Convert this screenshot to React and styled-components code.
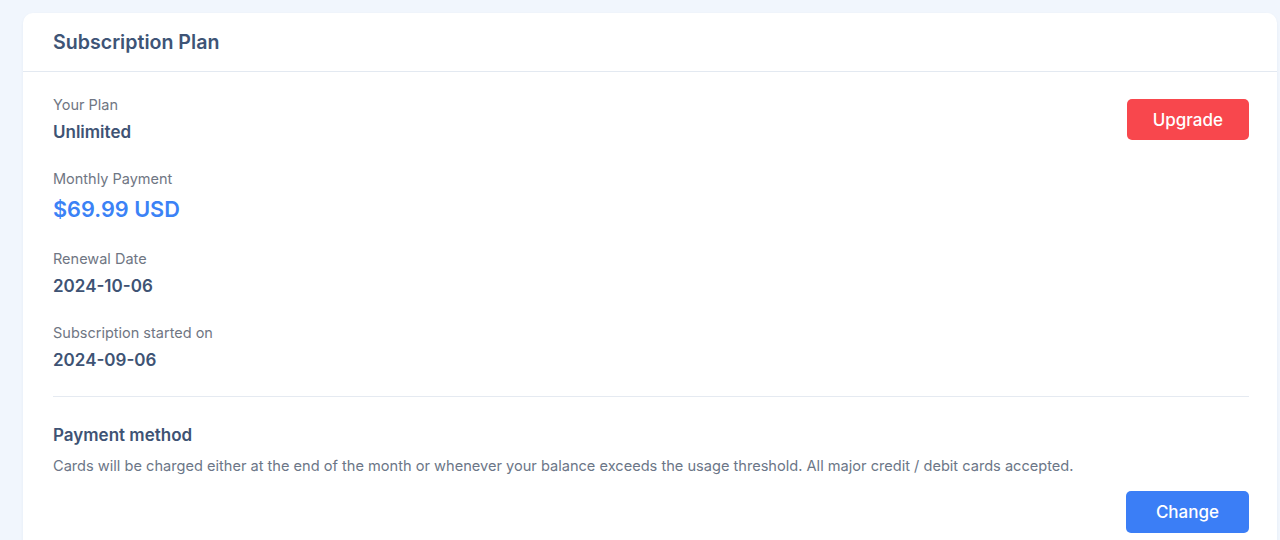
import React from "react";
import styled, { createGlobalStyle } from "styled-components";

const GlobalStyle = createGlobalStyle`
  html, body {
    margin: 0;
    padding: 0;
    background: #f1f6fd;
    font-family: Inter, "Noto Sans", sans-serif;
  }
`;

const fields = [
  { label: "Your Plan", value: "Unlimited" },
  { label: "Monthly Payment", value: "$69.99 USD", accent: true },
  { label: "Renewal Date", value: "2024-10-06" },
  { label: "Subscription started on", value: "2024-09-06" },
];

function App() {
  const [first, ...rest] = fields;
  return (
    <Page>
      <GlobalStyle />
      <Card>
        <CardHeader>
          <Title>Subscription Plan</Title>
        </CardHeader>
        <CardBody>
          <TopRow>
            <Field>
              <Label>{first.label}</Label>
              <Value>{first.value}</Value>
            </Field>
            <Button $tone="red">Upgrade</Button>
          </TopRow>
          {rest.map((f) => (
            <Field key={f.label} $spaced>
              <Label>{f.label}</Label>
              <Value $accent={f.accent}>{f.value}</Value>
            </Field>
          ))}
          <Divider />
          <SectionTitle>Payment method</SectionTitle>
          <Description>
            Cards will be charged either at the end of the month or whenever your
            balance exceeds the usage threshold. All major credit / debit cards
            accepted.
          </Description>
          <Actions>
            <Button $tone="blue">Change</Button>
          </Actions>
        </CardBody>
      </Card>
    </Page>
  );
}

const Page = styled.div`
  padding: 13px 3px 0 23px;
  min-height: 540px;
  box-sizing: border-box;
`;

const Card = styled.div`
  background: #ffffff;
  border-radius: 10px;
  box-shadow: 0 1px 3px rgba(30, 60, 110, 0.06);
  padding-bottom: 30px;
`;

const CardHeader = styled.div`
  height: 58px;
  display: flex;
  align-items: center;
  padding: 0 30px;
  border-bottom: 1px solid #e3e9f1;
`;

const Title = styled.h2`
  margin: 0;
  font-size: 19.6px;
  line-height: 24px;
  font-weight: 600;
  color: #3e5476;
`;

const CardBody = styled.div`
  padding: 23px 28px 0 30px;
`;

const TopRow = styled.div`
  display: flex;
  justify-content: space-between;
  align-items: center;
`;

const Field = styled.div`
  display: flex;
  flex-direction: column;
  gap: 5px;
  margin-top: ${(p) => (p.$spaced ? "25px" : "0")};
`;

const Label = styled.div`
  font-size: 14.5px;
  line-height: 20px;
  color: #6f7683;
`;

const Value = styled.div`
  font-size: ${(p) => (p.$accent ? "21.7px" : "17px")};
  line-height: ${(p) => (p.$accent ? "30px" : "24px")};
  font-weight: 600;
  color: ${(p) => (p.$accent ? "#3b82f6" : "#3e5374")};
`;

const Divider = styled.div`
  height: 1px;
  background: #e5eaf1;
  margin: 24px 0 26px;
`;

const SectionTitle = styled.h3`
  margin: 0;
  font-size: 17px;
  line-height: 24px;
  font-weight: 600;
  color: #3e5374;
`;

const Description = styled.p`
  margin: 9px 0 0;
  font-size: 14.6px;
  line-height: 20px;
  color: #6b7687;
`;

const Actions = styled.div`
  display: flex;
  justify-content: flex-end;
  margin-top: 15px;
`;

const Button = styled.button`
  height: ${(p) => (p.$tone === "red" ? "41px" : "42px")};
  padding: 0 ${(p) => (p.$tone === "red" ? "26px" : "30px")};
  border: none;
  border-radius: 5px;
  font-family: inherit;
  font-size: 17px;
  font-weight: 500;
  color: #ffffff;
  background: ${(p) => (p.$tone === "red" ? "#f8474d" : "#3b7ef6")};
  cursor: pointer;
`;

export default App;
